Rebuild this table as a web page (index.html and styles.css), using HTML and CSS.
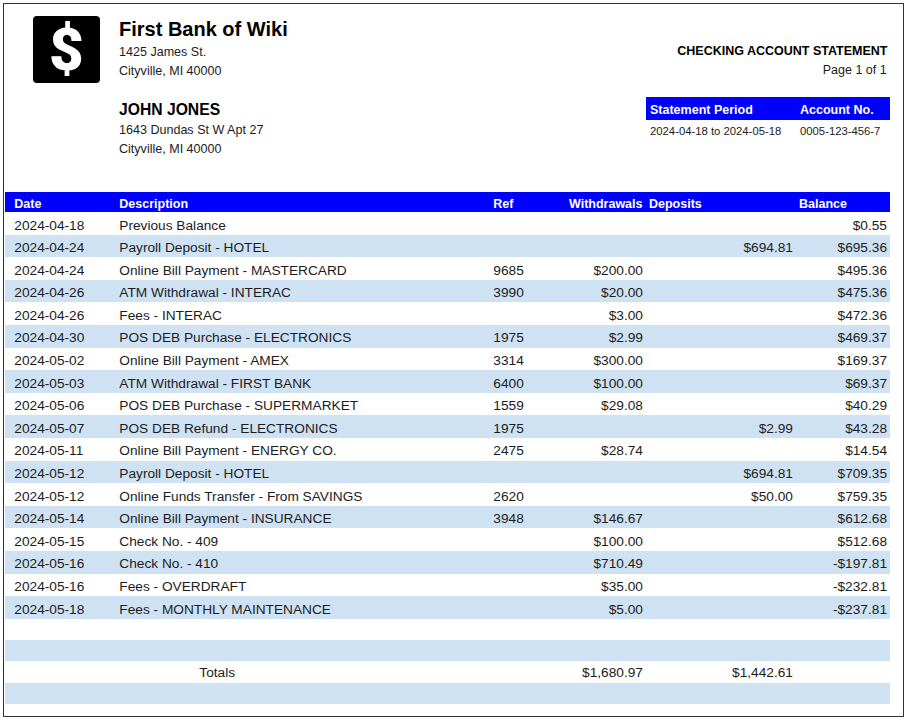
FILE: index.html
```html
<!DOCTYPE html>
<html lang="en">
<head>
<meta charset="utf-8">
<title>Checking Account Statement</title>
<link rel="stylesheet" href="styles.css">
</head>
<body>
<div class="page">
  <header class="top">
    <div class="logo"><span class="logo-glyph">$</span></div>
    <div class="bank">
      <div class="bank-name">First Bank of Wiki</div>
      <div class="addr">1425 James St.</div>
      <div class="addr">Cityville, MI 40000</div>
      <div class="cust-name">JOHN JONES</div>
      <div class="addr">1643 Dundas St W Apt 27</div>
      <div class="addr">Cityville, MI 40000</div>
    </div>
    <div class="stmt">
      <div class="stmt-title">CHECKING ACCOUNT STATEMENT</div>
      <div class="stmt-page">Page 1 of 1</div>
      <div class="stmt-grid">
        <div class="stmt-head">Statement Period</div>
        <div class="stmt-head">Account No.</div>
        <div class="stmt-val">2024-04-18 to 2024-05-18</div>
        <div class="stmt-val">0005-123-456-7</div>
      </div>
    </div>
  </header>
  <table class="tx">
    <colgroup>
      <col class="c-date"><col class="c-desc"><col class="c-ref"><col class="c-wd"><col class="c-dep"><col class="c-bal">
    </colgroup>
    <thead>
      <tr><th>Date</th><th>Description</th><th>Ref</th><th>Withdrawals</th><th>Deposits</th><th>Balance</th></tr>
    </thead>
    <tbody>
      <tr><td>2024-04-18</td><td>Previous Balance</td><td></td><td class="num"></td><td class="num"></td><td class="num">$0.55</td></tr>
      <tr><td>2024-04-24</td><td>Payroll Deposit - HOTEL</td><td></td><td class="num"></td><td class="num">$694.81</td><td class="num">$695.36</td></tr>
      <tr><td>2024-04-24</td><td>Online Bill Payment - MASTERCARD</td><td>9685</td><td class="num">$200.00</td><td class="num"></td><td class="num">$495.36</td></tr>
      <tr><td>2024-04-26</td><td>ATM Withdrawal - INTERAC</td><td>3990</td><td class="num">$20.00</td><td class="num"></td><td class="num">$475.36</td></tr>
      <tr><td>2024-04-26</td><td>Fees - INTERAC</td><td></td><td class="num">$3.00</td><td class="num"></td><td class="num">$472.36</td></tr>
      <tr><td>2024-04-30</td><td>POS DEB Purchase - ELECTRONICS</td><td>1975</td><td class="num">$2.99</td><td class="num"></td><td class="num">$469.37</td></tr>
      <tr><td>2024-05-02</td><td>Online Bill Payment - AMEX</td><td>3314</td><td class="num">$300.00</td><td class="num"></td><td class="num">$169.37</td></tr>
      <tr><td>2024-05-03</td><td>ATM Withdrawal - FIRST BANK</td><td>6400</td><td class="num">$100.00</td><td class="num"></td><td class="num">$69.37</td></tr>
      <tr><td>2024-05-06</td><td>POS DEB Purchase - SUPERMARKET</td><td>1559</td><td class="num">$29.08</td><td class="num"></td><td class="num">$40.29</td></tr>
      <tr><td>2024-05-07</td><td>POS DEB Refund - ELECTRONICS</td><td>1975</td><td class="num"></td><td class="num">$2.99</td><td class="num">$43.28</td></tr>
      <tr><td>2024-05-11</td><td>Online Bill Payment - ENERGY CO.</td><td>2475</td><td class="num">$28.74</td><td class="num"></td><td class="num">$14.54</td></tr>
      <tr><td>2024-05-12</td><td>Payroll Deposit - HOTEL</td><td></td><td class="num"></td><td class="num">$694.81</td><td class="num">$709.35</td></tr>
      <tr><td>2024-05-12</td><td>Online Funds Transfer - From SAVINGS</td><td>2620</td><td class="num"></td><td class="num">$50.00</td><td class="num">$759.35</td></tr>
      <tr><td>2024-05-14</td><td>Online Bill Payment - INSURANCE</td><td>3948</td><td class="num">$146.67</td><td class="num"></td><td class="num">$612.68</td></tr>
      <tr><td>2024-05-15</td><td>Check No. - 409</td><td></td><td class="num">$100.00</td><td class="num"></td><td class="num">$512.68</td></tr>
      <tr><td>2024-05-16</td><td>Check No. - 410</td><td></td><td class="num">$710.49</td><td class="num"></td><td class="num">-$197.81</td></tr>
      <tr><td>2024-05-16</td><td>Fees - OVERDRAFT</td><td></td><td class="num">$35.00</td><td class="num"></td><td class="num">-$232.81</td></tr>
      <tr><td>2024-05-18</td><td>Fees - MONTHLY MAINTENANCE</td><td></td><td class="num">$5.00</td><td class="num"></td><td class="num">-$237.81</td></tr>
      <tr class="foot"><td></td><td></td><td></td><td></td><td></td><td></td></tr>
      <tr class="foot"><td></td><td></td><td></td><td></td><td></td><td></td></tr>
      <tr class="foot"><td></td><td class="totals-label">Totals</td><td></td><td class="num">$1,680.97</td><td class="num">$1,442.61</td><td></td></tr>
      <tr class="foot"><td></td><td></td><td></td><td></td><td></td><td></td></tr>
    </tbody>
  </table>
</div>
</body>
</html>
```

FILE: styles.css
```css
html, body {
  margin: 0;
  padding: 0;
  background: #ffffff;
}

body {
  font-family: "Liberation Sans", Arial, sans-serif;
  color: #1c1c1c;
}

.page {
  box-sizing: border-box;
  width: 901px;
  height: 714px;
  margin: 3px;
  border: 1px solid #333333;
}

/* ---------- top section ---------- */
.top {
  box-sizing: border-box;
  display: flex;
  align-items: flex-start;
  height: 188px;
  padding: 12px 13px 0 29px;
}

.logo {
  flex: none;
  width: 67px;
  height: 67px;
  border-radius: 4px;
  background: #000000;
  display: flex;
  align-items: center;
  justify-content: center;
}

.logo-glyph {
  display: block;
  font-family: Roboto, "Liberation Sans", sans-serif;
  font-weight: 900;
  font-size: 60px;
  line-height: 67px;
  height: 67px;
  color: #ffffff;
}

.bank {
  flex: none;
  margin-left: 19px;
  color: #000000;
}

.bank-name {
  font-size: 20px;
  font-weight: bold;
  line-height: 26.6px;
}

.addr {
  font-size: 12.55px;
  line-height: 19.5px;
  color: #1c1c1c;
}

.cust-name {
  margin-top: 17.3px;
  font-size: 15.7px;
  font-weight: bold;
  line-height: 22px;
}

.stmt {
  flex: none;
  width: 244.3px;
  margin-left: auto;
  padding-top: 25.9px;
}

.stmt-title {
  font-size: 12.5px;
  font-weight: bold;
  line-height: 19.5px;
  text-align: right;
  padding-right: 2.5px;
  color: #000000;
}

.stmt-page {
  font-size: 12.5px;
  line-height: 19.5px;
  text-align: right;
  padding-right: 3.3px;
}

.stmt-grid {
  margin-top: 16.4px;
  display: grid;
  grid-template-columns: 150px 1fr;
}

.stmt-head {
  background: #0000ff;
  color: #ffffff;
  font-size: 12.5px;
  font-weight: bold;
  height: 22.7px;
  box-sizing: border-box;
  padding: 3.5px 0 0 4.3px;
  line-height: 19.2px;
}

.stmt-val {
  font-size: 11.3px;
  line-height: 16px;
  padding: 3px 0 0 4.3px;
}

/* ---------- transactions table ---------- */
.tx {
  table-layout: fixed;
  width: 885px;
  margin-left: 1px;
  border-collapse: collapse;
  border-spacing: 0;
}

.c-date { width: 111.3px; }
.c-desc { width: 374px; }
.c-ref  { width: 75.7px; }
.c-wd   { width: 80px; }
.c-dep  { width: 150px; }
.c-bal  { width: 94px; }

.tx th,
.tx td {
  padding: 0 3px;
  vertical-align: top;
  white-space: nowrap;
}

.tx th:first-child,
.tx td:first-child {
  padding-left: 9.3px;
}

.tx thead tr {
  height: 20px;
  background: #0000ff;
}

.tx th {
  color: #ffffff;
  font-size: 12.5px;
  font-weight: bold;
  line-height: 16px;
  text-align: left;
  padding-top: 3.6px;
}

.tx tbody tr {
  height: 22.6px;
}

.tx td {
  font-size: 13.7px;
  line-height: 16px;
  padding-top: 5.5px;
  color: #1c1c1c;
}

.tx tbody tr:nth-child(even) {
  background: #cfe2f3;
}

.tx tbody tr.foot {
  height: 21.3px;
}

.tx tbody tr.foot td {
  padding-top: 3.85px;
}

.tx td.num {
  text-align: right;
}

.tx td.totals-label {
  padding-left: 83px;
}
```
